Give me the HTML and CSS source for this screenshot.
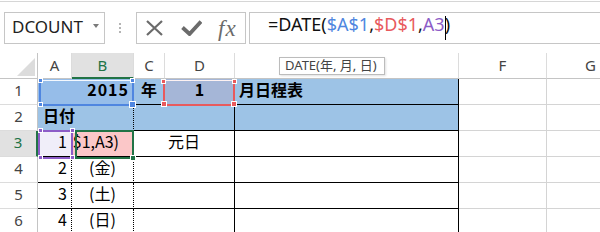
FILE: index.html
```html
<!DOCTYPE html>
<html>
<head>
<meta charset="utf-8">
<link rel="stylesheet" href="styles.css">
</head>
<body>
<div class="ribbon-edge"></div>
<div class="fbar">
  <div class="namebox"><span class="nb-text">DCOUNT</span><span class="nb-arrow"></span></div>
  <div class="grip"><i></i><i></i><i></i></div>
  <div class="btns">
    <svg class="ic-x" viewBox="0 0 17 16"><path d="M1 1 L16 15 M16 1 L1 15" stroke="#6b6b6b" stroke-width="2.2" fill="none"/></svg>
    <svg class="ic-check" viewBox="0 0 21 16"><path d="M1.5 7.5 L8.5 14 L20 1.5" stroke="#6b6b6b" stroke-width="3.8" fill="none"/></svg>
    <span class="fx">fx</span>
  </div>
  <div class="formula">=DATE(<span class="ref-b">$A$1</span>,<span class="ref-r">$D$1</span>,<span class="ref-p">A3</span><span class="caret"></span>)</div>
</div>
<div class="sheet">
  <div class="corner"><svg viewBox="0 0 38 25" width="38" height="25"><polygon points="17,23 35,23 35,5" fill="#dcdcdc"/></svg></div>
  <div class="ch">A</div>
  <div class="ch sel">B</div>
  <div class="ch">C</div>
  <div class="ch">D</div>
  <div class="ch"></div>
  <div class="ch">F</div>
  <div class="ch">G</div>

  <div class="rh">1</div>
  <div class="c span2 fill-ab bk-b r b n2015">2015</div>
  <div class="c fill bk-b b pl7">年</div>
  <div class="c fill-d bk-b b ctr">1</div>
  <div class="c fill bk-b bk-r b pl4">月日程表</div>
  <div class="c"></div>
  <div class="c"></div>

  <div class="rh">2</div>
  <div class="c span2 fill bk-b dt-r b pl5">日付</div>
  <div class="c span2 fill bk-b bk-r"></div>
  <div class="c fill bk-b bk-r"></div>
  <div class="c"></div>
  <div class="c"></div>

  <div class="rh sel">3</div>
  <div class="c lav dt-r bk-b r">1</div>
  <div class="c pink dt-r bk-b r edit">$1,A3)</div>
  <div class="c span2 bk-b bk-r ctr">元日</div>
  <div class="c bk-b bk-r"></div>
  <div class="c"></div>
  <div class="c"></div>

  <div class="rh">4</div>
  <div class="c dt-r bk-b r">2</div>
  <div class="c dt-r bk-b ctr">(金)</div>
  <div class="c span2 bk-b bk-r"></div>
  <div class="c bk-b bk-r"></div>
  <div class="c"></div>
  <div class="c"></div>

  <div class="rh">5</div>
  <div class="c dt-r bk-b r">3</div>
  <div class="c dt-r bk-b ctr">(土)</div>
  <div class="c span2 bk-b bk-r"></div>
  <div class="c bk-b bk-r"></div>
  <div class="c"></div>
  <div class="c"></div>

  <div class="rh">6</div>
  <div class="c dt-r bk-b r">4</div>
  <div class="c dt-r bk-b ctr">(日)</div>
  <div class="c span2 bk-b bk-r"></div>
  <div class="c bk-b bk-r"></div>
  <div class="c"></div>
  <div class="c"></div>

  <div class="rng rng-blue"></div>
  <div class="rng rng-red"></div>
  <div class="rng rng-purple"></div>
  <div class="active"></div>

  <span class="hd hd-blue hd-s" style="left:38px;top:25px"></span>
  <span class="hd hd-blue hd-s" style="left:130px;top:25px"></span>
  <span class="hd hd-blue hd-s" style="left:38px;top:49px"></span>
  <span class="hd hd-blue hd-l" style="left:129px;top:48px"></span>

  <span class="hd hd-red hd-s" style="left:161px;top:26px"></span>
  <span class="hd hd-red hd-s" style="left:232px;top:26px"></span>
  <span class="hd hd-red hd-m" style="left:161px;top:48px"></span>
  <span class="hd hd-red hd-m" style="left:231px;top:48px"></span>

  <span class="hd hd-purple hd-s" style="left:38px;top:75px"></span>
  <span class="hd hd-purple hd-s" style="left:70px;top:75px"></span>
  <span class="hd hd-purple hd-s" style="left:38px;top:102px"></span>
  <span class="hd hd-purple hd-s" style="left:70px;top:102px"></span>

  <span class="hd hd-green hd-m" style="left:130px;top:102px"></span>

  <div class="tooltip">DATE(年, 月, 日)</div>
</div>
</body>
</html>
```

FILE: styles.css
```css
* { box-sizing: border-box; }
html, body { margin: 0; padding: 0; }
body {
  width: 600px;
  height: 232px;
  overflow: hidden;
  background: #fff;
  font-family: "Noto Sans", "Liberation Sans", sans-serif;
}

.ribbon-edge { height: 1px; margin-top: 1px; background: #d6d6d6; }

.fbar {
  height: 51px;
  display: flex;
  align-items: flex-start;
  padding: 10px 0 0 4px;
}
.namebox {
  width: 101px;
  height: 32px;
  border: 1px solid #c6c6c6;
  display: flex;
  align-items: flex-start;
  padding: 3px 5px 0 7px;
}
.nb-text { font-size: 17px; line-height: 22px; color: #222; }
.nb-arrow {
  margin-left: auto;
  margin-top: 8px;
  width: 0;
  height: 0;
  border-left: 3.5px solid transparent;
  border-right: 3.5px solid transparent;
  border-top: 4px solid #7a7a7a;
}
.grip {
  margin-left: 14px;
  width: 2px;
  height: 32px;
  display: flex;
  flex-direction: column;
  justify-content: center;
  gap: 2px;
}
.grip i { display: block; width: 2px; height: 2px; background: #b4b4b4; }

.btns {
  margin-left: 15px;
  width: 110px;
  height: 32px;
  border: 1px solid #c6c6c6;
  display: flex;
  align-items: center;
  padding-left: 9px;
}
.ic-x { width: 17px; height: 16px; display: block; }
.ic-check { width: 21px; height: 16px; margin-left: 18px; display: block; }
.fx {
  margin-left: 16px;
  font-family: "Liberation Serif", serif;
  font-style: italic;
  font-size: 23px;
  line-height: 1;
  letter-spacing: 1px;
  color: #6b6b6b;
}

.formula {
  margin-left: 3px;
  flex: 1 0 auto;
  margin-right: -30px;
  height: 32px;
  border: 1px solid #c6c6c6;
  padding-left: 18px;
  font-size: 18px;
  line-height: 22px;
  color: #111;
  white-space: nowrap;
  overflow: hidden;
}
.ref-b { color: #4f86e0; }
.ref-r { color: #e85a5d; }
.ref-p { color: #8c5cc7; }
.caret {
  display: inline-block;
  width: 1px;
  height: 24px;
  background: #000;
  vertical-align: -9px;
  margin-right: -1px;
}

/* sheet */
.sheet {
  position: relative;
  display: grid;
  grid-template-columns: 38px 34px 62px 31px 70px 224px 88px 88px;
  grid-template-rows: repeat(7, 26px);
  width: 635px;
}
.corner {
  border-right: 1px solid #c4c4c4;
  border-bottom: 1px solid #c4c4c4;
}
.corner svg { display: block; }
.ch {
  border-right: 1px solid #dcdcdc;
  border-bottom: 1px solid #c4c4c4;
  text-align: center;
  font-size: 15px;
  line-height: 25px;
  color: #444;
}
.ch.sel {
  background: #e1e1e1;
  color: #217346;
  border-bottom: 2px solid #217346;
}
.rh {
  border-right: 1px solid #c4c4c4;
  border-bottom: 1px solid #dcdcdc;
  display: flex;
  align-items: center;
  justify-content: center;
  padding-bottom: 3px;
  font-size: 15px;
  line-height: 20px;
  color: #444;
}
.rh.sel {
  background: #e1e1e1;
  color: #217346;
  border-right: 2px solid #217346;
}

.c {
  border-right: 1px solid #d4d4d4;
  border-bottom: 1px solid #d4d4d4;
  display: flex;
  align-items: center;
  padding: 0 4px 5px 4px;
  font-family: "Noto Sans CJK JP", "Noto Sans", sans-serif;
  font-size: 16px;
  line-height: 20px;
  color: #000;
  white-space: nowrap;
}
.span2 { grid-column: span 2; }
.r { justify-content: flex-end; }
.ctr { justify-content: center; }
.b { font-weight: bold; }
.pl4 { padding-left: 4px; }
.pl5 { padding-left: 5px; }
.pl7 { padding-left: 7px; }
.n2015 { letter-spacing: 1px; padding-right: 4px; }

.fill { background: #9dc3e6; border-right-color: #9dc3e6; }
.fill-ab { background: #96bde9; border-right-color: #96bde9; }
.fill-d { background: #a5b6d7; }
.lav { background: #f0eef9; }
.pink { background: #fbc7c8; }
.edit { padding-right: 14px; }

.bk-b { border-bottom-color: #000; }
.bk-r { border-right: 1px solid #000; }
.dt-r { border-right: 1px dotted #000; }

/* range finders & selection */
.rng { position: absolute; pointer-events: none; }
.rng-blue {
  left: 39px; top: 27px; width: 95px; height: 26px;
  border: 2px solid #4f86e0;
  border-top: 1px solid #f4f8fe;
}
.rng-red {
  left: 163px; top: 27px; width: 72px; height: 26px;
  border: 2px solid #e85a5d;
  border-top: 1px solid #fdf2f2;
}
.rng-purple {
  left: 38px; top: 77px; width: 35px; height: 29px;
  border: 2px solid #8c5cc7;
}
.active {
  position: absolute;
  left: 75px; top: 77px; width: 59px; height: 29px;
  border: 2px solid #217346;
}
.hd {
  position: absolute;
  display: block;
  border: 1px solid #fff;
}
.hd-s { width: 5px; height: 5px; }
.hd-m { width: 6px; height: 6px; }
.hd-l { width: 7px; height: 7px; }
.hd-blue { background: #4f86e0; }
.hd-red { background: #e85a5d; }
.hd-purple { background: #8c5cc7; }
.hd-green { background: #217346; }

.tooltip {
  position: absolute;
  left: 279px;
  top: 4px;
  width: 106px;
  height: 18px;
  background: #fff;
  border: 1px solid #bcbcbc;
  box-shadow: 1px 1px 2px rgba(0, 0, 0, 0.12);
  padding-left: 5px;
  font-family: "Noto Sans", "Noto Sans CJK JP", sans-serif;
  font-size: 13px;
  line-height: 15px;
  color: #444;
  white-space: nowrap;
}
```
